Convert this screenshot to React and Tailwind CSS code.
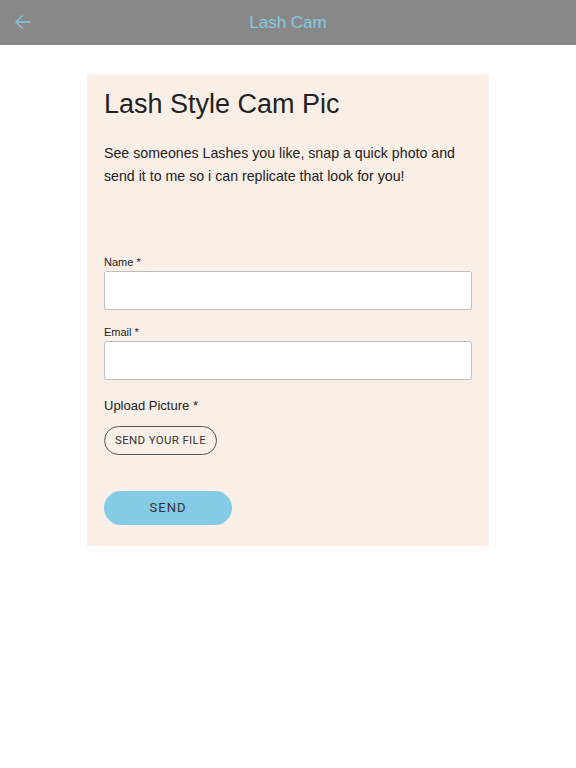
export default function App() {
  return (
    <div className="min-h-[768px] bg-white" style={{ fontFamily: '"Liberation Sans", Arial, sans-serif' }}>
      <header className="relative flex h-[45px] items-center justify-center bg-[#888888]">
        <button className="absolute left-[13px] top-[12px] text-[#86c9e2]">
          <svg width="20" height="20" viewBox="0 0 20 20" fill="none" stroke="currentColor" strokeWidth="1.4" strokeLinecap="round">
            <path d="M17 10H3M9 4L3 10L9 16" />
          </svg>
        </button>
        <h1 className="text-[17px] text-[#86c9e2]">Lash Cam</h1>
      </header>

      <div className="flex justify-center pt-[29px]">
        <div className="w-[402px] bg-[#faefe7] px-[17px] pb-[21px] pt-[13px]">
          <h2 className="text-[27px] leading-[34px] text-[#222]">Lash Style Cam Pic</h2>
          <p className="mt-[21px] text-[14.2px] leading-[23px] text-[#222]">
            See someones Lashes you like, snap a quick photo and send it to me so i can replicate that look for you!
          </p>

          <form className="mt-[67px]" onSubmit={(e) => e.preventDefault()}>
            <label className="block text-[11px] leading-[14px] text-[#222]">Name *</label>
            <input className="mt-[2px] block h-[39px] w-full rounded-[3px] border border-[#bdbdbd] bg-white" />

            <label className="mt-[15px] block text-[11px] leading-[14px] text-[#222]">Email *</label>
            <input className="mt-[2px] block h-[39px] w-full rounded-[3px] border border-[#bdbdbd] bg-white" />

            <div className="mt-[18px] text-[13px] leading-[16px] text-[#222]">Upload Picture *</div>
            <button
              type="button"
              className="mt-[12px] flex h-[29px] w-[113px] items-center justify-center rounded-full border border-[#555] text-[11.5px] tracking-[0.03em] text-[#333]"
              style={{ fontFamily: 'Roboto, sans-serif' }}
            >
              SEND YOUR FILE
            </button>

            <button
              type="submit"
              className="mt-[36px] flex h-[34px] w-[128px] items-center justify-center rounded-full bg-[#85cbe6] text-[13px] tracking-[0.08em] text-[#333]"
              style={{ fontFamily: 'Roboto, sans-serif' }}
            >
              SEND
            </button>
          </form>
        </div>
      </div>
    </div>
  );
}
